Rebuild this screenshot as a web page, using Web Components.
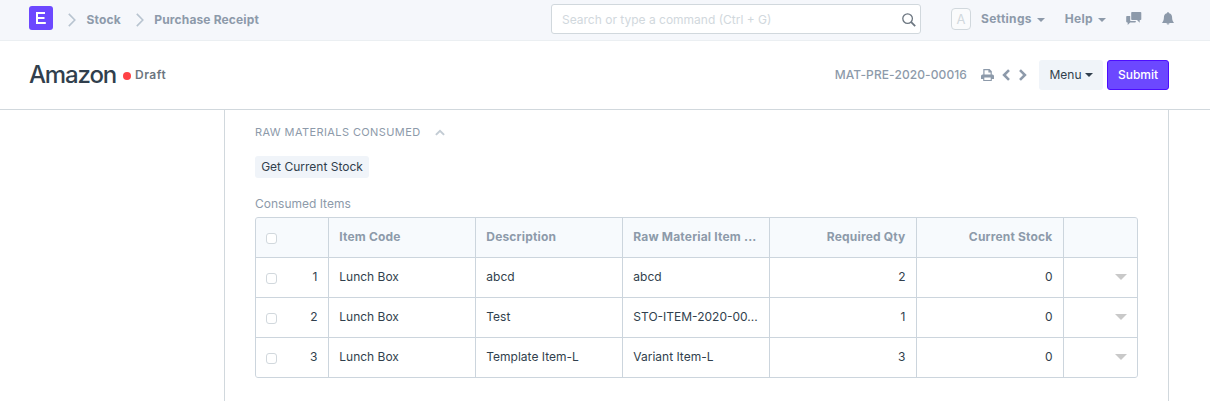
<!DOCTYPE html>
<html lang="en">
<head>
<meta charset="utf-8">
<title>Amazon - Purchase Receipt</title>
<style>
html, body { margin: 0; height: 100%; overflow: hidden; background: #fff; }
body { font: 12px/18px Inter, "Liberation Sans", sans-serif; color: #313f4d; }
</style>
</head>
<body>
<receipt-app></receipt-app>
<script>
function define(name, html, init) {
  const template = document.createElement('template');
  template.innerHTML = '<style>*{box-sizing:border-box}</style>' + html;
  customElements.define(name, class extends HTMLElement {
    constructor() {
      super();
      this.attachShadow({ mode: 'open' }).appendChild(template.content.cloneNode(true));
    }
    connectedCallback() { if (init) init(this, this.shadowRoot); }
  });
}

const icons = {
  crumb: [8, 14, '<path d="M.8 .9 6.8 7 .8 13.1" fill="none" stroke="currentColor" stroke-width="1.6"/>'],
  search: [14, 14, '<circle cx="5.6" cy="5.6" r="4.8" fill="none" stroke="currentColor" stroke-width="1.3"/><path d="m9.2 9.2 4 3.9" stroke="currentColor" stroke-width="1.8"/>'],
  caret: [8, 4, '<path d="M0 0h8L4 4z" fill="currentColor"/>'],
  chat: [16, 13, '<path d="M6 0h8.500q.8 0 .8.800v6.400q0 .8-.8.800h-.8v2.800L11 8H6q-.8 0-.8-.8V.8q0-.8.800-.8z" fill="currentColor"/><path d="M1 4h3.200v4.200q0 .9.900.9h4.700v.6q0 .7-.8.700H4.200L1.700 13v-2.600H1q-.8 0-.8-.8V4.800Q.2 4 1 4z" fill="currentColor"/>'],
  bell: [12, 13, '<path d="M6 .3c.8 0 1.100.5 1.100 1 2.100.5 3 2 3 4.200 0 2.300.5 3.700 1.700 4.900v.6H.2v-.6c1.200-1.200 1.700-2.600 1.700-4.900 0-2.200.9-3.700 3-4.200 0-.5.300-1 1.100-1z" fill="currentColor"/><path d="M4.500 11.200h3Q7.400 12.500 6 12.500T4.500 11.200z" fill="currentColor"/>'],
  print: [13, 12, '<path d="M2.900 6V.6h5.400l1.900 1.900V6M8 .8v2h2" fill="none" stroke="currentColor" stroke-width="1.200"/><path fill="currentColor" fill-rule="evenodd" d="M1.600 5.500h9.800Q13 5.500 13 7v3h-2.200v2H2.200v-2H0V7Q0 5.500 1.600 5.500zM3.300 8.600v2.300h6.400V8.600z"/>'],
  left: [8, 12, '<path d="M7 1.100 2.100 6 7 10.900" fill="none" stroke="currentColor" stroke-width="2.600"/>'],
  right: [8, 12, '<path d="M1 1.100 5.900 6 1 10.900" fill="none" stroke="currentColor" stroke-width="2.600"/>'],
  up: [10, 7, '<path d="m.9 5.900 4.100-4.100 4.100 4.100" fill="none" stroke="currentColor" stroke-width="2"/>'],
  open: [12, 6, '<path d="M0 0h12L6 6z" fill="currentColor"/>']
};

define('ui-icon', '<style>:host{display:block;flex:none}svg{display:block}</style><svg></svg>', (el, root) => {
  const [w, h, body] = icons[el.getAttribute('name')];
  const svg = root.querySelector('svg');
  svg.setAttribute('width', w);
  svg.setAttribute('height', h);
  svg.setAttribute('viewBox', `0 0 ${w} ${h}`);
  svg.innerHTML = body;
});

define('app-logo', `<style>
:host{display:block;width:24px;height:24px;background:#6c48ff;border-radius:3px;flex:none}
svg{display:block}</style>
<svg width="24" height="24"><path d="M8 7h8M8 12h7.500M8 17h8.800M8 6v12" fill="none" stroke="#fff" stroke-width="2"/></svg>`);

define('nav-bar', `<style>
:host{display:flex;height:41px;padding:0 35px 0 29px;background:#f5f7fb;border-bottom:1px solid #ebeff2;color:#8d9aaa;font-weight:700;align-items:center;letter-spacing:.15px}
.crumbs{display:flex;align-items:center;flex:1;height:38px;margin-top:-3px}
app-logo{margin-top:-2px}
.crumbs ui-icon{color:#b8c4d0;margin:2px 10.5px 0 15px}
.crumbs ui-icon + span{margin-top:2px}
.search{display:flex;align-items:center;justify-content:space-between;width:370px;height:30px;margin-top:-3px;padding:0 4px 0 10px;border:1px solid #d1d8dd;border-radius:3px;background:#fff;color:#d1d8dd;font-weight:400;letter-spacing:0}
.search span{margin-top:2px}
.search ui-icon{color:#6c7680;margin-top:2px}
.right{display:flex;align-items:center;width:224px;margin-left:30px;margin-top:-3px}
.avatar{width:20px;height:22px;border:1px solid #d1d8dd;border-radius:4px;background:#fafbfc;color:#d1d8dd;font-weight:400;font-size:13px;letter-spacing:0;text-align:center;line-height:21px;margin-top:1px}
.settings,.help{letter-spacing:.3px}
.settings{margin-left:10px}.c1{margin:2px 0 0 5px}.help{margin-left:20px}.c2{margin:3px 0 0 5px}
.chat{margin:0 0 0 20px}.bell{margin:0 0 0 20px}
</style>
<div class="crumbs"><app-logo></app-logo><ui-icon name="crumb"></ui-icon><span>Stock</span><ui-icon name="crumb"></ui-icon><span>Purchase Receipt</span></div>
<div class="search"><span>Search or type a command (Ctrl + G)</span><ui-icon name="search"></ui-icon></div>
<div class="right"><span class="avatar">A</span><span class="settings">Settings</span><ui-icon class="c1" name="caret"></ui-icon><span class="help">Help</span><ui-icon class="c2" name="caret"></ui-icon><ui-icon class="chat" name="chat"></ui-icon><ui-icon class="bell" name="bell"></ui-icon></div>`);

define('page-head', `<style>
:host{display:flex;align-items:center;height:69px;padding:0 41px 0 29px;border-bottom:1px solid #d1d8dd;background:#fff}
h1{margin:0;width:87px;font-size:24px;line-height:30px;font-weight:500;letter-spacing:-1.15px;white-space:nowrap}
.dot{width:8px;height:8px;border-radius:50%;background:#ff4245;margin:1px 4px 0 7px}
.status{font-weight:600;color:#6c7680;flex:1;letter-spacing:.5px}
.id{color:#8d9aaa;font-weight:500;letter-spacing:.1px}
ui-icon{color:#8d9aaa}.print{margin-left:14px}.left{margin-left:8px}.right{margin-left:9px}
button{font:inherit;height:30px;border:0;border-radius:3px;background:#f0f4f9;color:inherit;display:flex;align-items:center;justify-content:center;padding:0}
.menu{width:64px;margin-left:12px}.menu ui-icon{color:inherit;margin-left:3px}
.submit{width:62px;margin-left:4px;border:1px solid #4d0dff;background:#6c48ff;color:#fff;font-weight:500}
</style>
<h1>Amazon</h1><span class="dot"></span><span class="status">Draft</span>
<span class="id">MAT-PRE-2020-00016</span><ui-icon class="print" name="print"></ui-icon><ui-icon class="left" name="left"></ui-icon><ui-icon class="right" name="right"></ui-icon>
<button class="menu"><span>Menu</span><ui-icon name="caret"></ui-icon></button><button class="submit">Submit</button>`);

define('grid-row', `<style>
:host{display:grid;grid-template-columns:72px repeat(5,146px) 73px;column-gap:1px;height:40px;border-bottom:1px solid #ccd5dd;background:linear-gradient(#ccd5dd,#ccd5dd)}
:host([last]){height:39px;border-bottom:0}
.cell{padding:10px 10.5px 0 10.3px;background:#fff;overflow:hidden;white-space:nowrap;text-overflow:ellipsis}
:host([head]) .cell{background:#f7fafd;color:#8d9aaa;font-weight:700;letter-spacing:.18px}
.num{text-align:right}
.first{display:flex;justify-content:space-between;padding-left:10px}
.box{width:11px;height:11px;border:1px solid #d1d8dd;border-radius:3px;margin-top:5px;background:#fff}
.end{display:flex;justify-content:flex-end;padding:16px 10px 0 0;color:#c9c9c9}
</style>`, (el, root) => {
  const values = el.getAttribute('cells').split('|');
  values.forEach((value, i) => {
    const cell = document.createElement('div');
    cell.className = 'cell' + (i === 0 ? ' first' : i > 3 ? ' num' : '');
    if (i === 0) {
      const box = document.createElement('span');
      box.className = 'box';
      const index = document.createElement('span');
      index.textContent = value;
      cell.append(box, index);
    } else cell.textContent = value;
    root.append(cell);
  });
  const end = document.createElement('div');
  end.className = 'cell end';
  if (!el.hasAttribute('head')) {
    const icon = document.createElement('ui-icon');
    icon.setAttribute('name', 'open');
    end.append(icon);
  }
  root.append(end);
});

define('data-grid', `<style>:host{display:block;width:883px;height:161px;border:1px solid #ccd5dd;border-radius:3px;overflow:hidden}</style><slot></slot>`);

define('form-section', `<style>
:host{display:block;margin:0 41px 0 224px;height:291px;padding:13px 30px 0;border:solid #d1d8dd;border-width:0 1px}
.title{display:flex;align-items:center;color:#8d9aaa;font-size:11px;letter-spacing:.4px;height:18px}
.title ui-icon{color:#c3ccd4;margin-left:14px}
button{display:block;font:inherit;color:inherit;height:22px;width:114px;padding:0;margin:15px 0 17px;border:0;border-radius:3px;background:#f0f4f9}
label{display:block;color:#8d9aaa;margin-bottom:4px}
</style>
<div class="title"><span>RAW MATERIALS CONSUMED</span><ui-icon name="up"></ui-icon></div>
<button>Get Current Stock</button>
<label>Consumed Items</label>
<slot></slot>`);

define('receipt-app', `<style>:host{display:block}</style>
<nav-bar></nav-bar><page-head></page-head>
<form-section><data-grid>
<grid-row head cells="|Item Code|Description|Raw Material Item ...|Required Qty|Current Stock"></grid-row>
<grid-row cells="1|Lunch Box|abcd|abcd|2|0"></grid-row>
<grid-row cells="2|Lunch Box|Test|STO-ITEM-2020-00...|1|0"></grid-row>
<grid-row last cells="3|Lunch Box|Template Item-L|Variant Item-L|3|0"></grid-row>
</data-grid></form-section>`);
</script>
</body>
</html>
